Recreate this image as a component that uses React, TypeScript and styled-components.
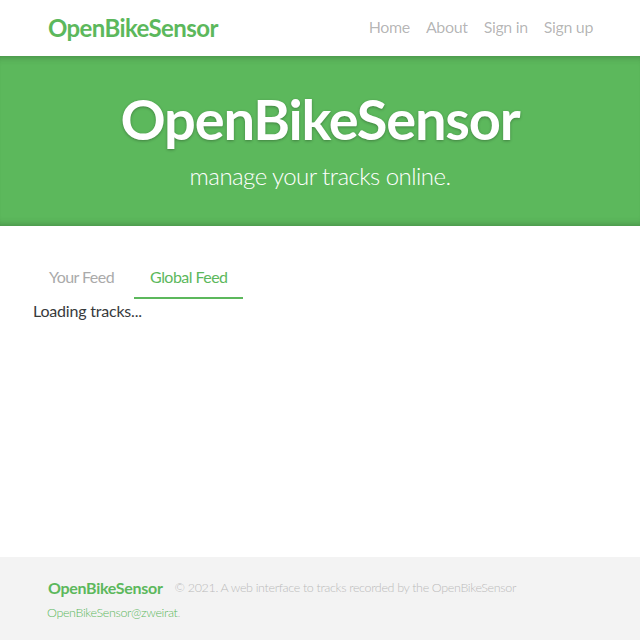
import React from "react";
import styled, { createGlobalStyle } from "styled-components";

const GREEN = "#5CB85C";

const Global = createGlobalStyle`
  html, body { margin: 0; padding: 0; }
  body {
    font-family: Lato, "Source Sans Pro", "Noto Sans", sans-serif;
    color: #373a3c;
    background: #fff;
  }
  * { box-sizing: border-box; }
`;

const Page = styled.div`
  min-height: 100vh;
  display: flex;
  flex-direction: column;
`;

const Container = styled.div`
  width: 576px;
  margin: 0 auto;
  padding: 0 15px;
`;

const NavBar = styled.nav`
  height: 56px;
  display: flex;
  align-items: center;
`;

const NavInner = styled(Container)`
  display: flex;
  align-items: center;
  justify-content: space-between;
  margin-top: -2px;
`;

const Brand = styled.a`
  font-family: Lato, sans-serif;
  font-weight: 700;
  font-size: 24px;
  letter-spacing: -0.6px;
  color: ${GREEN};
  text-decoration: none;
  margin-left: 1px;
`;

const NavLinks = styled.ul`
  display: flex;
  list-style: none;
  margin: 0;
  padding: 0;
  gap: 16px;
`;

const NavLink = styled.a`
  font-size: 16px;
  line-height: 24px;
  letter-spacing: -0.35px;
  color: rgba(0, 0, 0, 0.3);
  text-decoration: none;
`;

const Banner = styled.div`
  background: ${GREEN};
  color: #fff;
  padding: 32px 0 35px;
  margin-bottom: 31px;
  text-align: center;
  box-shadow: inset 0 8px 8px -8px rgba(0, 0, 0, 0.3),
    inset 0 -8px 8px -8px rgba(0, 0, 0, 0.3);
`;

const HeroTitle = styled.h1`
  margin: 0;
  font-family: Lato, sans-serif;
  font-weight: 700;
  font-size: 56px;
  letter-spacing: -1.2px;
  line-height: 62px;
  padding-bottom: 11px;
  text-shadow: 0 1px 3px rgba(0, 0, 0, 0.3);
`;

const HeroSub = styled.p`
  margin: 0;
  font-size: 24px;
  font-weight: 300;
  line-height: 30px;
  letter-spacing: -0.55px;
`;

const Main = styled.div`
  padding: 0 33px;
`;

const Tabs = styled.ul`
  display: flex;
  list-style: none;
  margin: 0;
  padding: 0;
  gap: 4px;
`;

const Tab = styled.li<{ $active?: boolean }>`
  padding: 8px 16px;
  font-size: 16px;
  line-height: 24px;
  letter-spacing: -0.55px;
  color: ${(p) => (p.$active ? GREEN : "#aaa")};
  border-bottom: 2px solid ${(p) => (p.$active ? GREEN : "transparent")};
  cursor: pointer;
`;

const Loading = styled.div`
  font-size: 16px;
  line-height: 24px;
  letter-spacing: -0.2px;
  color: #373a3c;
`;

const Footer = styled.footer`
  margin-top: auto;
  background: #f3f3f3;
  padding: 16px 0 16px;
`;

const FooterText = styled.div`
  line-height: 23px;
`;

const FooterLogo = styled.a`
  font-family: Lato, sans-serif;
  font-weight: 700;
  font-size: 16px;
  letter-spacing: -0.3px;
  color: ${GREEN};
  text-decoration: none;
  margin-left: 1px;
  vertical-align: middle;
`;

const Attribution = styled.span`
  margin-left: 12px;
  font-size: 12.5px;
  font-weight: 300;
  letter-spacing: -0.35px;
  color: #bbb;
  vertical-align: middle;
`;

const FooterLink = styled.a`
  color: ${GREEN};
  text-decoration: none;
`;

export default function App() {
  return (
    <Page>
      <Global />
      <NavBar>
        <NavInner>
          <Brand href="#">OpenBikeSensor</Brand>
          <NavLinks>
            <li><NavLink href="#">Home</NavLink></li>
            <li><NavLink href="#">About</NavLink></li>
            <li><NavLink href="#">Sign in</NavLink></li>
            <li><NavLink href="#">Sign up</NavLink></li>
          </NavLinks>
        </NavInner>
      </NavBar>
      <Banner>
        <HeroTitle>OpenBikeSensor</HeroTitle>
        <HeroSub>manage your tracks online.</HeroSub>
      </Banner>
      <Main>
        <Tabs>
          <Tab>Your Feed</Tab>
          <Tab $active>Global Feed</Tab>
        </Tabs>
        <Loading>Loading tracks...</Loading>
      </Main>
      <Footer>
        <Container>
          <FooterText>
            <FooterLogo href="#">OpenBikeSensor</FooterLogo>
            <Attribution>
              © 2021. A web interface to tracks recorded by the OpenBikeSensor{" "}
              <FooterLink href="#">OpenBikeSensor@zweirat</FooterLink>.
            </Attribution>
          </FooterText>
        </Container>
      </Footer>
    </Page>
  );
}
